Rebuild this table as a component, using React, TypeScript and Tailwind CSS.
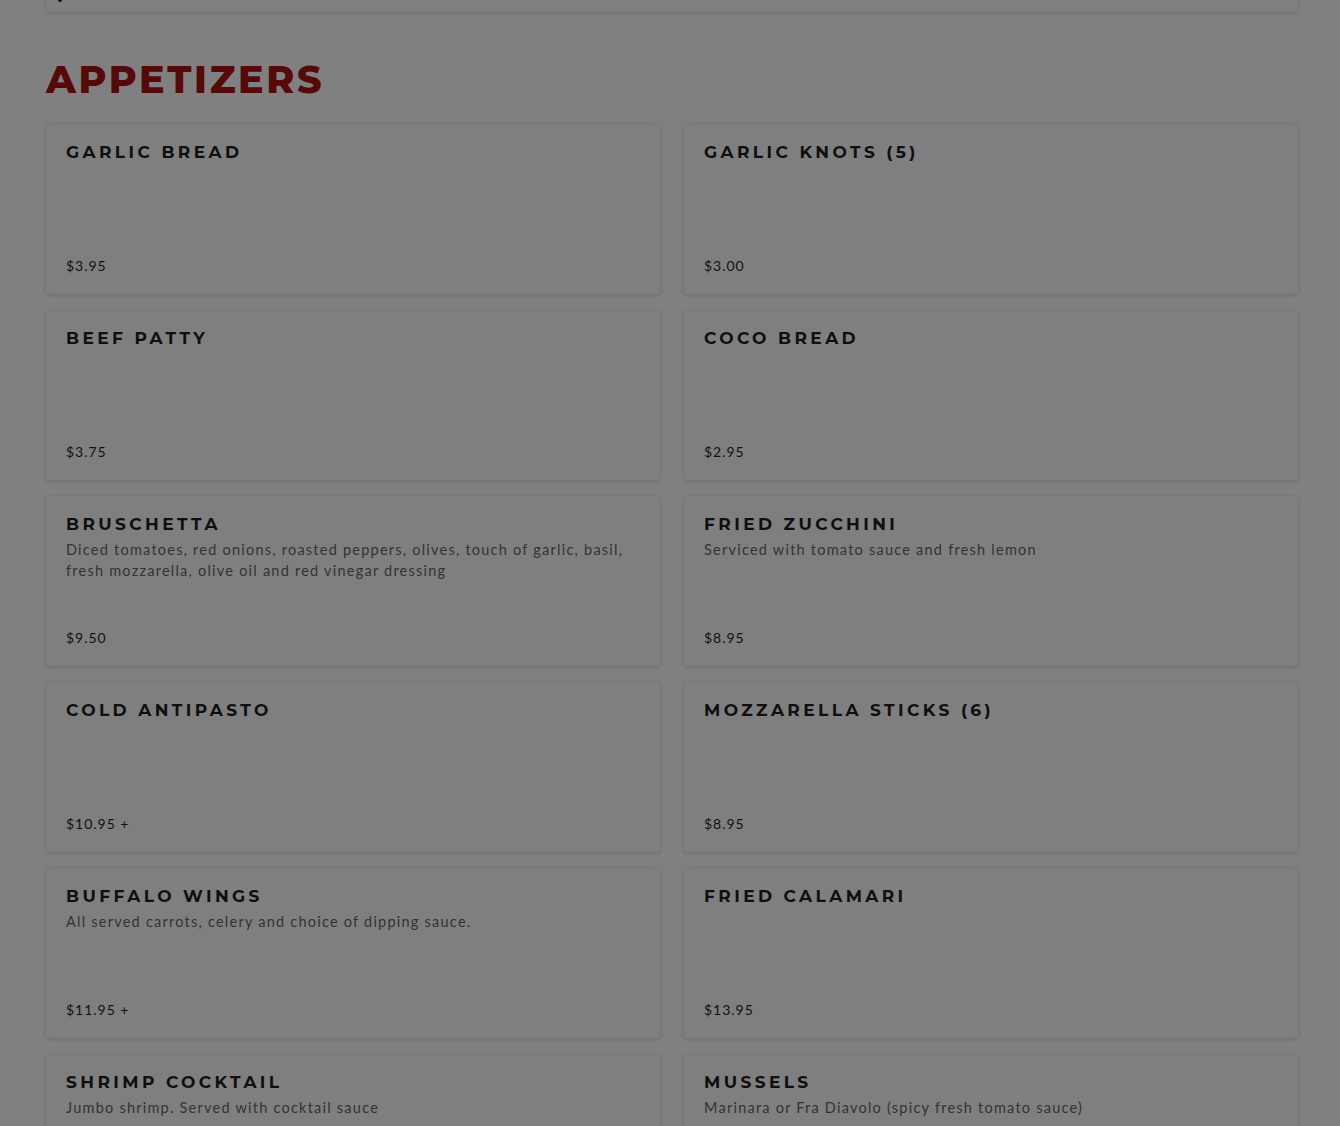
import React from "react";

type Item = { name: string; desc?: string; price: string };

const items: Item[] = [
  { name: "Garlic Bread", price: "$3.95" },
  { name: "Garlic Knots (5)", price: "$3.00" },
  { name: "Beef Patty", price: "$3.75" },
  { name: "Coco Bread", price: "$2.95" },
  {
    name: "Bruschetta",
    desc: "Diced tomatoes, red onions, roasted peppers, olives, touch of garlic, basil, fresh mozzarella, olive oil and red vinegar dressing",
    price: "$9.50",
  },
  { name: "Fried Zucchini", desc: "Serviced with tomato sauce and fresh lemon", price: "$8.95" },
  { name: "Cold Antipasto", price: "$10.95 +" },
  { name: "Mozzarella Sticks (6)", price: "$8.95" },
  { name: "Buffalo Wings", desc: "All served carrots, celery and choice of dipping sauce.", price: "$11.95 +" },
  { name: "Fried Calamari", price: "$13.95" },
  { name: "Shrimp Cocktail", desc: "Jumbo shrimp. Served with cocktail sauce", price: "$10.95" },
  { name: "Mussels", desc: "Marinara or Fra Diavolo (spicy fresh tomato sauce)", price: "$12.95" },
];

function MenuCard({ item }: { item: Item }) {
  return (
    <div className="flex h-[170px] flex-col rounded-[3px] bg-[#7f7f7f] px-5 pt-[17px] pb-[19px] shadow-[0_1px_4px_rgba(0,0,0,0.16)]">
      <h3 className="font-['Montserrat','Lato',sans-serif] text-[17px] leading-[22px] font-bold uppercase tracking-[0.2em] text-[#0f0f0f]">
        {item.name}
      </h3>
      {item.desc && (
        <p className="mt-[4px] font-['Lato',sans-serif] text-[14.5px] leading-[21px] tracking-[0.085em] text-[#333]">
          {item.desc}
        </p>
      )}
      <div className="mt-auto font-['Lato',sans-serif] text-[14px] leading-[18px] tracking-[0.07em] text-[#111]">
        {item.price}
      </div>
    </div>
  );
}

export default function App() {
  return (
    <div className="min-h-[1126px] overflow-hidden bg-[#808080] pl-[46px] pr-[42px]">
      {/* bottom of the previous section */}
      <div className="-mt-[20px] h-[32px] rounded-[3px] bg-[#7f7f7f] pl-[12px] pt-[18px] shadow-[0_1px_4px_rgba(0,0,0,0.16)]">
        <div className="h-[4px] w-[4px] rounded-full bg-[#111]" />
      </div>

      <h2 className="mt-[48px] font-['Montserrat','Lato',sans-serif] text-[38px] leading-[40px] font-extrabold uppercase tracking-[0.07em] text-[#560909]">
        Appetizers
      </h2>

      <div className="mt-[24px] grid grid-cols-2 gap-x-6 gap-y-4">
        {items.map((item) => (
          <MenuCard key={item.name} item={item} />
        ))}
      </div>
    </div>
  );
}
